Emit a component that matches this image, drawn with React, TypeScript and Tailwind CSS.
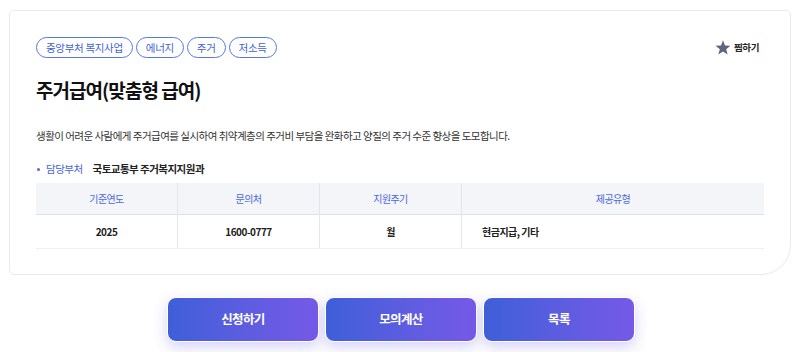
const tags = ["중앙부처 복지사업", "에너지", "주거", "저소득"];

const columns = [
  { head: "기준연도", value: "2025", align: "center" },
  { head: "문의처", value: "1600-0777", align: "center" },
  { head: "지원주기", value: "월", align: "center" },
  { head: "제공유형", value: "현금지급, 기타", align: "left" },
];

const StarIcon = () => (
  <svg width="16" height="15" viewBox="0 0 24 23">
    <polygon
      points="12,0.5 15,8.4 23.5,8.7 16.8,14 19.2,22.3 12,17.5 4.8,22.3 7.2,14 0.5,8.7 9,8.4"
      fill="#5f6480"
    />
  </svg>
);

const App = () => {
  return (
    <div className="min-h-screen w-[800px] bg-white font-['Noto_Sans_CJK_KR','Noto_Sans',sans-serif] text-[#111]">
      {/* CARD */}
      <div className="mx-[9px] mt-[10px] h-[265px] rounded-[5px] rounded-br-[30px] border border-[#e9e9ee] bg-white px-[26px] pt-[26px]">
        <div className="flex items-center justify-between">
          <div className="flex gap-[3px]">
            {tags.map((t) => (
              <span
                key={t}
                className="flex h-[21px] items-center rounded-full border border-[#5677e4] px-[9px] text-[10.5px] tracking-[-0.03em] text-[#3f5fd6]"
              >
                {t}
              </span>
            ))}
          </div>
          <button className="flex items-center gap-[3px] pr-[5px] text-[9.5px] font-bold tracking-[-0.04em] text-[#222]">
            <StarIcon />
            찜하기
          </button>
        </div>

        <h1 className="mt-[20px] text-[19px] leading-[24px] font-bold tracking-[-0.05em] text-[#111]">
          주거급여(맞춤형 급여)
        </h1>

        <p className="mt-[26px] text-[10.5px] leading-[16px] tracking-[-0.05em] text-[#333]">
          생활이 어려운 사람에게 주거급여를 실시하여 취약계층의 주거비 부담을 완화하고 양질의 주거 수준 향상을 도모합니다.
        </p>

        <div className="mt-[17px] flex items-center text-[10.5px] leading-[16px] tracking-[-0.05em]">
          <span className="ml-[1px] mr-[6px] h-[3px] w-[3px] rounded-full bg-[#4b6ae0]" />
          <span className="text-[#4663dd]">담당부처</span>
          <span className="ml-[10px] font-bold text-[#222]">국토교통부 주거복지지원과</span>
        </div>

        {/* TABLE */}
        <div className="mt-[6px] grid grid-cols-[141px_142px_142px_1fr]">
          {columns.map((c, i) => (
            <div
              key={c.head}
              className={`flex h-[32px] items-center justify-center border-b-[1.5px] border-[#dfe1ea] bg-[#f4f5f9] text-[10px] tracking-[-0.06em] text-[#4a68dc] ${i > 0 ? "border-l border-l-[#e3e5ee]" : ""}`}
            >
              {c.head}
            </div>
          ))}
          {columns.map((c, i) => (
            <div
              key={c.value}
              className={`flex h-[34px] items-center border-b border-[#eeeff3] text-[10px] font-bold tracking-[-0.05em] text-[#222] ${c.align === "left" ? "justify-start pl-[20px]" : "justify-center"} ${i > 0 ? "border-l border-l-[#e6e7ec]" : ""}`}
            >
              {c.value}
            </div>
          ))}
        </div>
      </div>

      {/* BUTTONS */}
      <div className="mt-[22px] flex justify-center gap-[6px] pl-[2px]">
        {["신청하기", "모의계산", "목록"].map((b) => (
          <button
            key={b}
            className="flex h-[45px] w-[152px] items-center justify-center rounded-[9px] border-[1.5px] border-white bg-gradient-to-r from-[#3d5fd8] to-[#7559e7] text-[12.5px] font-bold tracking-[-0.05em] text-white shadow-[0_5px_14px_rgba(100,90,220,0.28)]"
          >
            {b}
          </button>
        ))}
      </div>
    </div>
  );
};

export default App;
